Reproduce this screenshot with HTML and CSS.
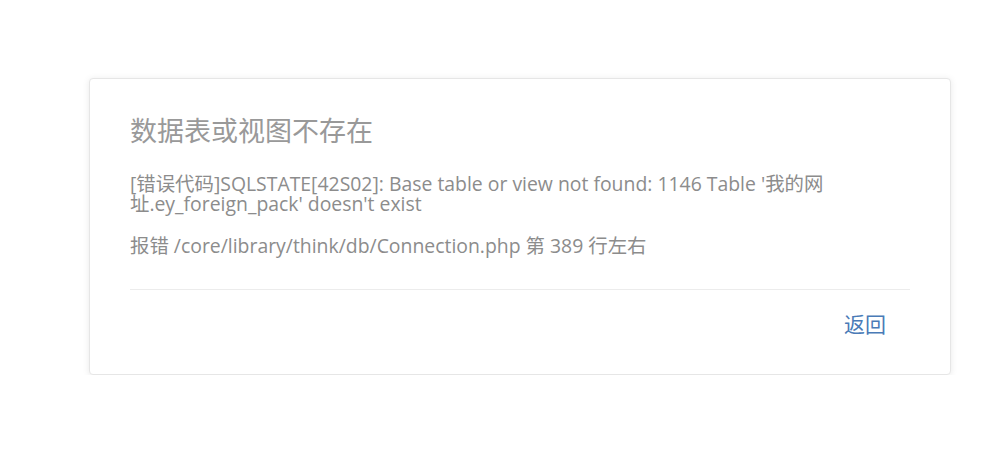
FILE: index.html
```html
<!DOCTYPE html>
<html lang="zh-CN">
<head>
<meta charset="utf-8">
<title>数据表或视图不存在</title>
<link rel="stylesheet" href="styles.css">
</head>
<body>
<div class="card">
  <div class="card-body">
    <h1 class="title">数据表或视图不存在</h1>
    <p class="msg">[错误代码]SQLSTATE[42S02]: Base table or view not found: 1146 Table '我的网址.ey_foreign_pack' doesn't exist</p>
    <p class="msg">报错 /core/library/think/db/Connection.php 第 389 行左右</p>
  </div>
  <div class="card-footer">
    <a class="back" href="#">返回</a>
  </div>
</div>
</body>
</html>
```
FILE: styles.css
```css
html, body {
  margin: 0;
  padding: 0;
  background: #ffffff;
}
body {
  font-family: "Open Sans", "Noto Sans CJK SC", sans-serif;
  padding-top: 78px;
}
.card {
  box-sizing: border-box;
  margin-left: 89px;
  width: 862px;
  height: 297px;
  border: 1px solid #e6e6e6;
  border-radius: 4px;
  box-shadow: 0 1px 7px rgba(0, 0, 0, 0.09);
  background: #fff;
  padding: 0 40px;
}
.card-body {
  padding-top: 37px;
  padding-bottom: 33px;
  border-bottom: 1px solid #ececec;
}
.title {
  margin: 0 0 31px;
  font-family: "Noto Sans CJK SC", sans-serif;
  font-size: 27px;
  font-weight: 400;
  line-height: 27px;
  color: #999;
}
.msg {
  margin: 0 0 22px;
  font-size: 19.4px;
  line-height: 20px;
  color: #8c8c8c;
}
.msg:last-child {
  margin-bottom: 0;
}
.card-footer {
  display: flex;
  justify-content: flex-end;
  padding: 23px 24px 0 0;
}
.back {
  font-family: "Noto Sans CJK SC", sans-serif;
  font-size: 21px;
  line-height: 21px;
  color: #4a7bb7;
  text-decoration: none;
}
```
